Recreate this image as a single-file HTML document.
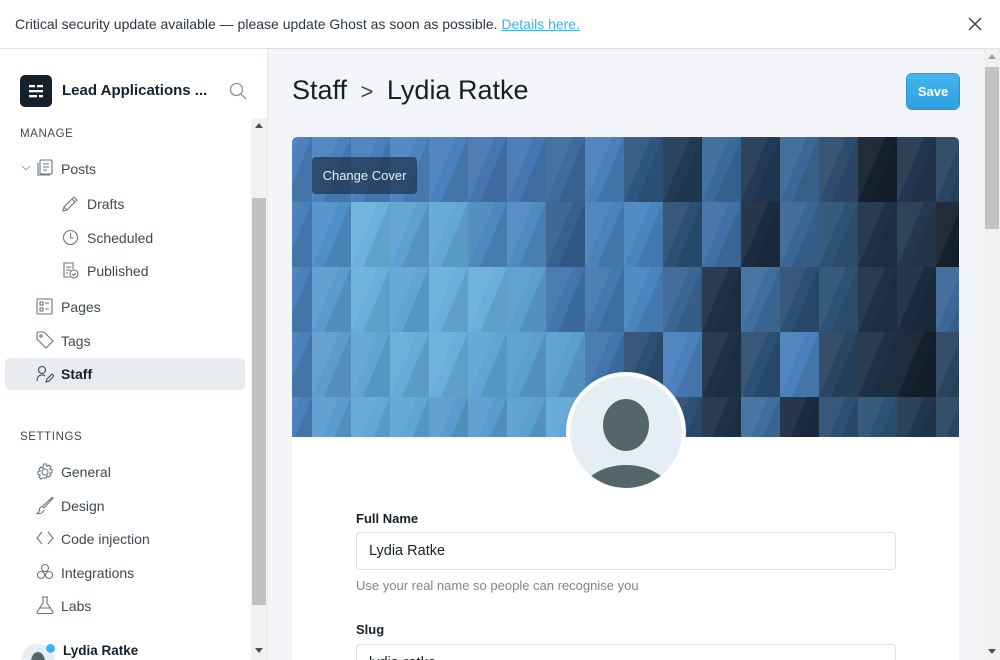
<!DOCTYPE html>
<html><head><meta charset="utf-8"><style>
*{box-sizing:border-box;margin:0;padding:0}
html,body{width:1000px;height:660px;overflow:hidden}
body{font-family:"Liberation Sans",sans-serif;background:#f4f5f8;position:relative;color:#15212a}
.banner{position:absolute;left:0;top:0;width:1000px;height:49px;background:#fff;border-bottom:1px solid #dde1e5;font-size:14px;color:#2c3640;padding:16px 15px}
.banner a{color:#3eb0ef;text-decoration:underline}
.close{position:absolute;right:18px;top:17px}
.side{position:absolute;left:0;top:49px;width:268px;height:611px;background:#fff;border-right:1px solid #e5e8eb}
.logo{position:absolute;left:20px;top:26px;width:32px;height:32px;background:#15212a;border-radius:5px}
.site{position:absolute;left:62px;top:33px;font-size:15px;font-weight:bold;color:#15212a}
.sb{position:absolute;left:251px;top:69px;width:16px;height:542px;background:#f1f1f1}
.sb .t{position:absolute;left:1px;top:80px;width:14px;height:407px;background:#c1c1c1}
.h{position:absolute;left:20px;font-size:11.5px;letter-spacing:.6px;color:#3d4852}
.it{position:absolute;left:61px;font-size:14px;color:#3d4852}
.it2{position:absolute;left:87px;font-size:14px;color:#3d4852}
.ic{position:absolute}
.sel{position:absolute;left:5px;top:309px;width:240px;height:32px;background:#e8ecf1;border-radius:5px}
.title{position:absolute;left:292px;top:75px;font-size:27px;color:#15212a}
.save{position:absolute;left:907px;top:74px;width:52px;height:35px;border-radius:5px;background:linear-gradient(#45b5f0,#2e9fdf);color:#fff;font-weight:bold;font-size:13px;text-align:center;line-height:35px;box-shadow:0 0 0 1px #2a95d6}
.card{position:absolute;left:292px;top:137px;width:667px;height:530px;background:#fff;border-radius:5px;overflow:hidden}
.cc{position:absolute;left:312px;top:157px;width:105px;height:37px;background:rgba(30,50,75,.7);border-radius:4px;color:#e9eef3;font-size:13px;line-height:37px;text-align:center}
.lbl{position:absolute;left:356px;font-size:13px;font-weight:bold;color:#15212a}
.inp{position:absolute;left:356px;width:540px;height:38px;border:1px solid #dae0e6;border-radius:4px;background:#fff;font-size:14.5px;padding:10px 12px;color:#15212a}
.help{position:absolute;left:356px;top:578px;font-size:13px;color:#7d878f}
.mb{position:absolute;left:984px;top:49px;width:16px;height:611px;background:#f1f1f1}
.mb .t{position:absolute;left:1px;top:18px;width:14px;height:162px;background:#c1c1c1}
</style></head><body>
<div class="banner">Critical security update available — please update Ghost as soon as possible. <a>Details here.</a>
<svg class="close" width="14" height="14" viewBox="0 0 14 14"><path d="M1 1L13 13M13 1L1 13" stroke="#444" stroke-width="1.5"/></svg></div>

<div class="side">
<div class="logo"><svg width="32" height="32" viewBox="0 0 32 32"><g fill="#fff"><rect x="9" y="10" width="6" height="2.3"/><rect x="17" y="10" width="6" height="2.3"/><rect x="9" y="15" width="14" height="2.3"/><rect x="9" y="20" width="8" height="2.3"/><rect x="19" y="20" width="4" height="2.3"/></g></svg></div>
<div class="site">Lead Applications ...</div>
<svg class="ic" style="left:229px;top:33px" width="18" height="18" viewBox="0 0 18 18"><circle cx="7.5" cy="7.5" r="6" fill="none" stroke="#8a949c" stroke-width="1.3"/><path d="M12 12l5 5" stroke="#8a949c" stroke-width="1.3"/></svg>
<div class="sb"><div class="t"></div><svg style="position:absolute;left:4px;top:5px" width="8" height="5"><path d="M0 5L4 0L8 5z" fill="#505050"/></svg><svg style="position:absolute;left:4px;top:530px" width="8" height="5"><path d="M0 0L4 5L8 0z" fill="#505050"/></svg></div>
<div class="h" style="top:79px">MANAGE</div>
<svg class="ic" style="left:21px;top:116px" width="10" height="6"><path d="M1 1l4 4 4-4" fill="none" stroke="#9aa3aa"/></svg>
<svg class="ic" style="left:36px;top:110px" width="18" height="18" viewBox="0 0 18 18" fill="none" stroke="#6b757d" stroke-width="1.1"><rect x="4" y="1" width="12" height="14" rx="1"/><path d="M2 4v12h12M7 5h6M7 8h6M7 11h4"/></svg>
<div class="it" style="top:112px">Posts</div>
<svg class="ic" style="left:62px;top:146px" width="17" height="17" viewBox="0 0 17 17" fill="none" stroke="#6b757d" stroke-width="1.1"><path d="M1 16l1-4L12 2l3 3L5 15zM10 4l3 3M2 12l3 3"/></svg>
<div class="it2" style="top:147px">Drafts</div>
<svg class="ic" style="left:62px;top:180px" width="17" height="17" viewBox="0 0 17 17" fill="none" stroke="#6b757d" stroke-width="1.1"><circle cx="8.5" cy="8.5" r="7"/><path d="M8.5 4v5h3"/></svg>
<div class="it2" style="top:181px">Scheduled</div>
<svg class="ic" style="left:62px;top:213px" width="17" height="17" viewBox="0 0 17 17" fill="none" stroke="#6b757d" stroke-width="1.1"><path d="M8 15H2V1h9v6M4 5h5M4 8h5M4 11h2"/><circle cx="12" cy="12" r="4"/><path d="M10 12l1.5 1.5L14 11"/></svg>
<div class="it2" style="top:214px">Published</div>
<svg class="ic" style="left:36px;top:249px" width="17" height="17" viewBox="0 0 17 17" fill="none" stroke="#6b757d" stroke-width="1.1"><rect x="1" y="1" width="15" height="15" rx="1"/><rect x="4" y="4" width="3" height="3"/><rect x="4" y="10" width="3" height="3"/><path d="M9 5h4M9 11h4"/></svg>
<div class="it" style="top:250px">Pages</div>
<svg class="ic" style="left:36px;top:282px" width="18" height="18" viewBox="0 0 18 18" fill="none" stroke="#6b757d" stroke-width="1.1"><path d="M1 2v6l9 9 7-7-9-9H2z"/><circle cx="5" cy="5" r="1.2"/></svg>
<div class="it" style="top:284px">Tags</div>
<div class="sel"></div>
<svg class="ic" style="left:36px;top:316px" width="18" height="18" viewBox="0 0 18 18" fill="none" stroke="#3d4852" stroke-width="1.1"><circle cx="6" cy="5" r="3.5"/><path d="M1 16c0-4 2-6 5-6 1.5 0 2.5.4 3 1M10 17l1-3 5-5 2 2-5 5z"/></svg>
<div class="it" style="top:317px;font-weight:bold;color:#15212a">Staff</div>
<div class="h" style="top:382px">SETTINGS</div>
<svg class="ic" style="left:36px;top:414px" width="18" height="18" viewBox="0 0 18 18" fill="none" stroke="#6b757d" stroke-width="1.1"><circle cx="9" cy="9" r="3"/><path d="M7.5 1h3l.5 2.3 2-1.2 2 2-1.2 2 2.2.5v3l-2.2.5 1.2 2-2 2-2-1.2-.5 2.1h-3L7 14.8l-2 1.2-2-2 1.2-2L2 11.5v-3L4.2 8 3 6l2-2 2 1.2z"/></svg>
<div class="it" style="top:415px">General</div>
<svg class="ic" style="left:36px;top:448px" width="18" height="18" viewBox="0 0 18 18" fill="none" stroke="#6b757d" stroke-width="1.1"><path d="M17 1L8 11l-1.5-1.5L16 .5zM6.5 9.5c-2 0-3 1.5-3 3.5 0 1.5-1 2.5-2.5 3.5 3 .5 6-.5 7-3.5"/></svg>
<div class="it" style="top:449px">Design</div>
<svg class="ic" style="left:36px;top:482px" width="18" height="14" viewBox="0 0 18 14" fill="none" stroke="#6b757d" stroke-width="1.1"><path d="M6 1L1 7l5 6M12 1l5 6-5 6"/></svg>
<div class="it" style="top:482px">Code injection</div>
<svg class="ic" style="left:36px;top:514px" width="18" height="18" viewBox="0 0 18 18" fill="none" stroke="#6b757d" stroke-width="1.1"><circle cx="9" cy="5" r="3.5"/><circle cx="5" cy="12" r="3.5"/><circle cx="13" cy="12" r="3.5"/></svg>
<div class="it" style="top:516px">Integrations</div>
<svg class="ic" style="left:36px;top:547px" width="18" height="18" viewBox="0 0 18 18" fill="none" stroke="#6b757d" stroke-width="1.1"><path d="M6 1h6M7 1v6L1 16c0 1 .5 1.5 1.5 1.5h13c1 0 1.5-.5 1.5-1.5L11 7V1M3 12h12"/></svg>
<div class="it" style="top:549px">Labs</div>
<div style="position:absolute;left:21px;top:595px;width:34px;height:34px;border-radius:50%;background:#e6edf3;overflow:hidden"><div style="position:absolute;left:10px;top:8px;width:14px;height:20px;border-radius:50%;background:#55666d"></div></div>
<div style="position:absolute;left:45px;top:594px;width:11px;height:11px;border-radius:50%;background:#3eb0ef;border:1.5px solid #fff"></div>
<div class="it" style="left:63px;top:594px;font-weight:bold;color:#15212a;font-size:13.5px">Lydia Ratke</div>
</div>

<div class="title">Staff <span style="font-size:22px;color:#3d4852;margin:0 6px">&gt;</span> Lydia Ratke</div>
<div class="save">Save</div>

<div class="card">
<svg width="667" height="300" viewBox="0 0 667 300" style="display:block">
<defs><pattern id="tri" x="-19" y="0" width="39" height="65" patternUnits="userSpaceOnUse"><path d="M39 0L39 65L12 65z" fill="rgba(0,0,0,0.09)"/><path d="M0 0L27 0L0 65z" fill="rgba(255,255,255,0.05)"/></pattern></defs>
<g>
<rect x="0" y="0" width="21" height="66" fill="#4a80bb"/><rect x="20" y="0" width="40" height="66" fill="#4b82bd"/><rect x="59" y="0" width="40" height="66" fill="#4a7fba"/><rect x="98" y="0" width="40" height="66" fill="#4d84bf"/><rect x="137" y="0" width="40" height="66" fill="#4a80bb"/><rect x="176" y="0" width="40" height="66" fill="#4676b0"/><rect x="215" y="0" width="40" height="66" fill="#4578b2"/><rect x="254" y="0" width="40" height="66" fill="#3d6b9c"/><rect x="293" y="0" width="40" height="66" fill="#4a7fba"/><rect x="332" y="0" width="40" height="66" fill="#2f5680"/><rect x="371" y="0" width="40" height="66" fill="#223a55"/><rect x="410" y="0" width="40" height="66" fill="#3a6a9a"/><rect x="449" y="0" width="40" height="66" fill="#223a55"/><rect x="488" y="0" width="40" height="66" fill="#3b6896"/><rect x="527" y="0" width="40" height="66" fill="#2e4d6e"/><rect x="566" y="0" width="40" height="66" fill="#15202e"/><rect x="605" y="0" width="40" height="66" fill="#22374f"/><rect x="644" y="0" width="40" height="66" fill="#2a4561"/>
<rect x="0" y="65" width="21" height="66" fill="#4a80bb"/><rect x="20" y="65" width="40" height="66" fill="#5090c8"/><rect x="59" y="65" width="40" height="66" fill="#6ab2dd"/><rect x="98" y="65" width="40" height="66" fill="#5fa0d2"/><rect x="137" y="65" width="40" height="66" fill="#62a8d6"/><rect x="176" y="65" width="40" height="66" fill="#4d88c0"/><rect x="215" y="65" width="40" height="66" fill="#4f8ac2"/><rect x="254" y="65" width="40" height="66" fill="#36618f"/><rect x="293" y="65" width="40" height="66" fill="#4a82bb"/><rect x="332" y="65" width="40" height="66" fill="#4a85c0"/><rect x="371" y="65" width="40" height="66" fill="#2c4f74"/><rect x="410" y="65" width="40" height="66" fill="#4070a5"/><rect x="449" y="65" width="40" height="66" fill="#1c2c40"/><rect x="488" y="65" width="40" height="66" fill="#3a6694"/><rect x="527" y="65" width="40" height="66" fill="#2e5274"/><rect x="566" y="65" width="40" height="66" fill="#1e3147"/><rect x="605" y="65" width="40" height="66" fill="#24394f"/><rect x="644" y="65" width="40" height="66" fill="#15202e"/>
<rect x="0" y="130" width="21" height="66" fill="#4a80bb"/><rect x="20" y="130" width="40" height="66" fill="#5a9ccf"/><rect x="59" y="130" width="40" height="66" fill="#68b0dc"/><rect x="98" y="130" width="40" height="66" fill="#5fa5d6"/><rect x="137" y="130" width="40" height="66" fill="#6aafdb"/><rect x="176" y="130" width="40" height="66" fill="#6aafdb"/><rect x="215" y="130" width="40" height="66" fill="#5b9ed0"/><rect x="254" y="130" width="40" height="66" fill="#4375ae"/><rect x="293" y="130" width="40" height="66" fill="#4279b0"/><rect x="332" y="130" width="40" height="66" fill="#4a85c0"/><rect x="371" y="130" width="40" height="66" fill="#3a6694"/><rect x="410" y="130" width="40" height="66" fill="#1e3147"/><rect x="449" y="130" width="40" height="66" fill="#3e6e9e"/><rect x="488" y="130" width="40" height="66" fill="#2c4f74"/><rect x="527" y="130" width="40" height="66" fill="#2e5274"/><rect x="566" y="130" width="40" height="66" fill="#1e3147"/><rect x="605" y="130" width="40" height="66" fill="#1c2c40"/><rect x="644" y="130" width="40" height="66" fill="#3b6896"/>
<rect x="0" y="195" width="21" height="66" fill="#4a80bb"/><rect x="20" y="195" width="40" height="66" fill="#5d9ccf"/><rect x="59" y="195" width="40" height="66" fill="#5fa5d6"/><rect x="98" y="195" width="40" height="66" fill="#65acd8"/><rect x="137" y="195" width="40" height="66" fill="#6aafdb"/><rect x="176" y="195" width="40" height="66" fill="#5fa5d6"/><rect x="215" y="195" width="40" height="66" fill="#5b9ed0"/><rect x="254" y="195" width="40" height="66" fill="#5b9ed0"/><rect x="293" y="195" width="40" height="66" fill="#4375ae"/><rect x="332" y="195" width="40" height="66" fill="#2c4f74"/><rect x="371" y="195" width="40" height="66" fill="#4a80bb"/><rect x="410" y="195" width="40" height="66" fill="#1e3147"/><rect x="449" y="195" width="40" height="66" fill="#2c4f74"/><rect x="488" y="195" width="40" height="66" fill="#4a80bb"/><rect x="527" y="195" width="40" height="66" fill="#2a4561"/><rect x="566" y="195" width="40" height="66" fill="#1e3147"/><rect x="605" y="195" width="40" height="66" fill="#15202e"/><rect x="644" y="195" width="40" height="66" fill="#2a4561"/>
<rect x="0" y="260" width="21" height="40" fill="#4a80bb"/><rect x="20" y="260" width="40" height="40" fill="#5a9ccf"/><rect x="59" y="260" width="40" height="40" fill="#62a8d6"/><rect x="98" y="260" width="40" height="40" fill="#5fa5d6"/><rect x="137" y="260" width="40" height="40" fill="#5a9ccf"/><rect x="176" y="260" width="40" height="40" fill="#5a9ccf"/><rect x="215" y="260" width="40" height="40" fill="#5b9ed0"/><rect x="254" y="260" width="40" height="40" fill="#62a8d6"/><rect x="293" y="260" width="40" height="40" fill="#4375ae"/><rect x="332" y="260" width="40" height="40" fill="#2c4f74"/><rect x="371" y="260" width="40" height="40" fill="#2c4f74"/><rect x="410" y="260" width="40" height="40" fill="#1e3147"/><rect x="449" y="260" width="40" height="40" fill="#3e6e9e"/><rect x="488" y="260" width="40" height="40" fill="#1c2c40"/><rect x="527" y="260" width="40" height="40" fill="#2c4f74"/><rect x="566" y="260" width="40" height="40" fill="#2e5274"/><rect x="605" y="260" width="40" height="40" fill="#22374f"/><rect x="644" y="260" width="40" height="40" fill="#2a4561"/>
</g>
<rect width="667" height="300" fill="url(#tri)"/>
</svg>
</div>
<div class="cc">Change Cover</div>
<svg style="position:absolute;left:564px;top:371px" width="124" height="124" viewBox="0 0 124 124"><defs><clipPath id="cp"><circle cx="62" cy="61" r="56"/></clipPath></defs><circle cx="62" cy="61" r="60" fill="#fff"/><circle cx="62" cy="61" r="56" fill="#e6eef5"/><g clip-path="url(#cp)" fill="#55666b"><ellipse cx="62" cy="54" rx="23" ry="26"/><ellipse cx="62" cy="129" rx="48" ry="35"/></g></svg>

<div class="lbl" style="top:511px">Full Name</div>
<div class="inp" style="top:532px">Lydia Ratke</div>
<div class="help">Use your real name so people can recognise you</div>
<div class="lbl" style="top:622px">Slug</div>
<div class="inp" style="top:644px">lydia-ratke</div>

<div class="mb"><div class="t"></div><svg style="position:absolute;left:4px;top:5px" width="8" height="5"><path d="M0 5L4 0L8 5z" fill="#a0a0a0"/></svg><svg style="position:absolute;left:4px;top:600px" width="8" height="5"><path d="M0 0L4 5L8 0z" fill="#505050"/></svg></div>
</body></html>
